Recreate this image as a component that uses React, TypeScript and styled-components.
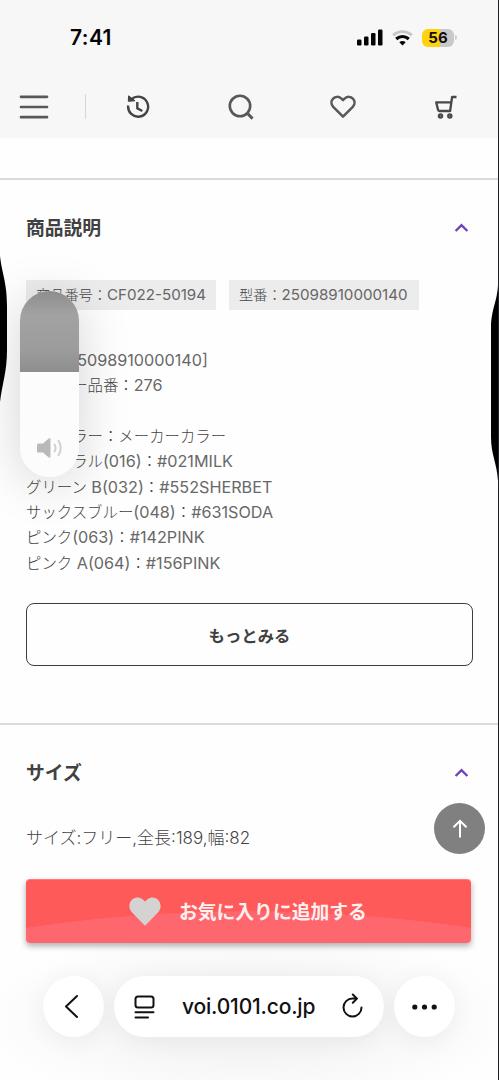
import React from 'react';
import styled, { createGlobalStyle } from 'styled-components';

const Global = createGlobalStyle`
  * { box-sizing: border-box; }
  body { margin: 0; background: #fefefe; }
  button { font: inherit; border: 0; padding: 0; background: none; color: inherit; }
`;

const Screen = styled.div`
  position: relative;
  width: 499px;
  height: 1080px;
  overflow: hidden;
  background: #fefefe;
  border-right: 1px solid #202022;
  font-family: Inter, 'Noto Sans CJK JP', sans-serif;
  color: #414141;
`;

const Header = styled.header`
  height: 138px;
  background: #f7f7f7;
`;

const StatusBar = styled.div`
  height: 75px;
  display: flex;
  align-items: center;
  justify-content: space-between;
  padding: 0 41px 0 70px;
`;

const Clock = styled.div`
  font-size: 21px;
  font-weight: 600;
  color: #050505;
  letter-spacing: 0.4px;
`;

const StatusIcons = styled.div`
  display: flex;
  align-items: center;
  height: 20px;
`;

const Battery = styled.div`
  width: 32px;
  height: 18px;
  margin-left: 9px;
  border-radius: 6px;
  background: linear-gradient(90deg, #fdd20f 56%, #c9c9cb 56%);
  font-size: 15px;
  line-height: 18px;
  font-weight: 700;
  text-align: center;
  color: #151005;
`;

const BatteryTip = styled.div`
  width: 2px;
  height: 5px;
  margin-left: 1px;
  border-radius: 0 2px 2px 0;
  background: #cfcfd1;
`;

const Nav = styled.nav`
  height: 63px;
  display: flex;
  align-items: center;
  padding-left: 18px;
`;

const NavButton = styled.button<{ $w: number; $gap?: number }>`
  display: flex;
  justify-content: center;
  width: ${(p) => p.$w}px;
  margin-left: ${(p) => p.$gap ?? 0}px;
  color: #58585a;
`;

const NavRule = styled.div`
  width: 1px;
  height: 25px;
  margin-left: 35px;
  background: #d6d6d6;
`;

const Spacer = styled.div`
  height: 40px;
`;

const Section = styled.section<{ $h?: number }>`
  height: ${(p) => (p.$h ? `${p.$h}px` : 'auto')};
  padding: 0 26px 0 26px;
  border-top: 2px solid #dadada;
`;

const SectionHead = styled.div`
  display: flex;
  align-items: center;
  justify-content: space-between;
  height: 98px;
  padding-right: 3px;
`;

const Title = styled.h2`
  margin: 0;
  font-size: 18.8px;
  font-weight: 700;
  line-height: 28px;
`;

const Tags = styled.div`
  display: flex;
  gap: 13px;
  margin-top: 2px;
`;

const Tag = styled.div<{ $w: number }>`
  width: ${(p) => p.$w}px;
  height: 30px;
  padding-left: 10px;
  background: #ececec;
  color: #666;
  font-size: 15.15px;
  line-height: 30px;
  white-space: nowrap;
`;

const TagJp = styled.span`
  font-size: 14.2px;
  font-weight: 300;
  color: #444;
`;

const Jp = styled.span`
  font-size: 15.4px;
  font-weight: 300;
  color: #444;
`;

const Details = styled.div`
  margin-top: 38px;
  font-size: 16.2px;
  line-height: 25.35px;
  color: #686868;
`;

const Line = styled.div`
  height: 25.35px;
  white-space: nowrap;
`;

const MoreButton = styled.button`
  display: block;
  width: 447px;
  height: 63px;
  margin-top: 27px;
  border: 1.5px solid #3e3e40;
  border-radius: 8px;
  font-size: 16.4px;
  font-weight: 700;
`;

const SizeText = styled.p`
  margin: 3px 0 0;
  font-size: 17px;
  font-weight: 300;
  line-height: 25px;
  color: #444;
  white-space: nowrap;
`;

const TopButton = styled.button`
  position: absolute;
  left: 434px;
  top: 803px;
  width: 51px;
  height: 51px;
  border-radius: 50%;
  background: #808080;
  display: flex;
  align-items: center;
  justify-content: center;
`;

const Dock = styled.div`
  position: absolute;
  left: 0;
  right: 0;
  bottom: 0;
  height: 201px;
  padding: 0 27px 0 26px;
  background: radial-gradient(ellipse 270px 90px at 50% 140px, #f5f5f5 40%, rgba(250, 250, 250, 0) 100%);
`;

const Favorite = styled.button`
  width: 445px;
  height: 64px;
  display: flex;
  align-items: center;
  padding-left: 102px;
  gap: 17px;
  border-radius: 4px;
  border-top: 1px solid #ff7a7c;
  background: radial-gradient(circle 1500px at 50% 1531px, #ff676f 99.95%, #ff5a5a 100%);
  box-shadow: 0 3px 6px rgba(0, 0, 0, 0.32);
  color: #fff0f0;
  font-size: 18.8px;
  font-weight: 700;
  line-height: 28px;
  white-space: nowrap;
`;

const FavoriteLabel = styled.span`
  padding-top: 2px;
`;

const Browser = styled.div`
  display: flex;
  gap: 10px;
  margin: 33px 0 0 17px;
`;

const Pill = styled.div<{ $w: number; $shift?: number }>`
  width: ${(p) => p.$w}px;
  height: 61px;
  flex: none;
  padding-right: ${(p) => p.$shift ?? 0}px;
  border-radius: 31px;
  background: #fff;
  box-shadow: 0 4px 26px rgba(0, 0, 0, 0.06);
  display: flex;
  align-items: center;
  justify-content: center;
`;

const Address = styled.span`
  width: 134px;
  margin: 0 26px 0 27px;
  font-size: 21px;
  font-weight: 500;
  letter-spacing: -0.18px;
  color: #111;
  white-space: nowrap;
`;

const Volume = styled.div`
  position: absolute;
  left: 20px;
  top: 291px;
  width: 59px;
  height: 186px;
  border-radius: 30px;
  overflow: hidden;
  background: #fcfcfc;
  display: flex;
  flex-direction: column;
  align-items: center;
`;

const VolumeShade = styled.div`
  position: absolute;
  left: 20px;
  top: 291px;
  width: 59px;
  height: 186px;
  border-radius: 30px;
  box-shadow: 0 6px 50px rgba(0, 0, 0, 0.17);
`;

const VolumeEmpty = styled.div`
  width: 59px;
  height: 81px;
  margin-bottom: 65px;
  background: linear-gradient(180deg, #8e8e8e, #a2a2a2 30%, #9c9c9c 72%, #8e8e8e);
`;

const Edge = styled.svg<{ $side: 'left' | 'right'; $top: number }>`
  position: absolute;
  top: ${(p) => p.$top}px;
  ${(p) => p.$side}: 0;
`;

const Chevron = () => (
  <svg width="15" height="12" viewBox="0 0 15 12" fill="none" stroke="#7340bd" strokeWidth="2.4">
    <path d="M1.600 8 7.500 2.200 13.400 8" />
  </svg>
);

const HEART = 'M13 22.500 3.300 12.600C-2.300 6.400 5-2.200 11.300 2.800L13 4.400l1.700-1.600C21-2.200 28.300 6.400 22.700 12.600Z';

export default function App() {
  return (
    <>
      <Global />
      <Screen>
        <Header>
          <StatusBar>
            <Clock>7:41</Clock>
            <StatusIcons>
              <svg width="26" height="17" viewBox="0 0 26 17" fill="#050505">
                <rect x="0" y="10.500" width="4.500" height="6" rx="1.200" />
                <rect x="7" y="7.500" width="4.500" height="9" rx="1.200" />
                <rect x="14" y="4" width="4.500" height="12.500" rx="1.200" />
                <rect x="21" y="0.500" width="4.500" height="16" rx="1.200" />
              </svg>
              <svg width="30" height="16" viewBox="-9 0 30 16" fill="none">
                <path d="M1.200 5.300C6.500.300 14.500.300 19.800 5.300" stroke="#c6c6c8" strokeWidth="2.800" />
                <path d="M4.200 9C8 5.700 13 5.700 16.800 9" stroke="#050505" strokeWidth="3.200" />
                <path d="M7.300 12.200q3.200-2.300 6.400 0L10.500 15.500Z" fill="#050505" />
              </svg>
              <Battery>56</Battery>
              <BatteryTip />
            </StatusIcons>
          </StatusBar>
          <Nav>
            <NavButton $w={32} aria-label="メニュー">
              <svg width="32" height="26" viewBox="0 0 32 26" stroke="currentColor" strokeWidth="2.700" strokeLinecap="round">
                <path d="M3 2.800H29M3 13H29M3 23.200H29" />
              </svg>
            </NavButton>
            <NavRule />
            <NavButton $w={26} $gap={39} aria-label="履歴">
              <svg width="26" height="24" viewBox="0 0 26 24" fill="none" stroke="#444446" strokeWidth="2.400">
                <path d="M3.200 10.500A10 10 0 1 0 6.500 4.200" />
                <path d="M3.600.800 3.300 6.300 10 5.800Z" fill="#444446" strokeWidth="1" />
                <path d="M12.300 7v6.300l5 2.700" />
              </svg>
            </NavButton>
            <NavButton $w={30} $gap={75} aria-label="検索">
              <svg width="30" height="28" viewBox="0 0 30 28" fill="none" stroke="currentColor" strokeWidth="2.600">
                <circle cx="14" cy="13" r="10.200" />
                <path d="m21.300 20.300 5.300 5.300" strokeWidth="3" />
              </svg>
            </NavButton>
            <NavButton $w={28} $gap={73} aria-label="お気に入り">
              <svg width="28" height="24" viewBox="-1 -0.500 28 24" fill="none" stroke="currentColor" strokeWidth="2.500" strokeLinejoin="round">
                <path d="M13 21.200 3.200 11.400C-2 5.300 5.500-1.800 11.200 2.900L13 4.700l1.800-1.800C20.500-1.800 28 5.300 22.800 11.400Z" />
              </svg>
            </NavButton>
            <NavButton $w={24} $gap={77} aria-label="カート">
              <svg width="24" height="24" viewBox="0 0 24 24" fill="none" stroke="#48484a" strokeWidth="2.300">
                <path d="M22.500 2h-4.400l-2 14H5.600Q4.200 16 4 14.600L2.200 7.300H17" strokeLinejoin="round" />
                <circle cx="6.500" cy="21" r="1.600" />
                <circle cx="15.800" cy="21" r="1.600" />
              </svg>
            </NavButton>
          </Nav>
        </Header>
        <Spacer />
        <Section $h={545}>
          <SectionHead><Title>商品説明</Title><Chevron /></SectionHead>
          <Tags>
            <Tag $w={190}><TagJp>商品番号：</TagJp>CF022-50194</Tag>
            <Tag $w={190}><TagJp>型番：</TagJp>25098910000140</Tag>
          </Tags>
          <Details>
            <Line>[<Jp>型番</Jp> 25098910000140]</Line>
            <Line><Jp>メーカー品番：</Jp>276</Line>
            <Line />
            <Line><Jp>当社カラー：メーカーカラー</Jp></Line>
            <Line><Jp>ナチュラル</Jp>(016)<Jp>：</Jp>#021MILK</Line>
            <Line><Jp>グリーン</Jp> B(032)<Jp>：</Jp>#552SHERBET</Line>
            <Line><Jp>サックスブルー</Jp>(048)<Jp>：</Jp>#631SODA</Line>
            <Line><Jp>ピンク</Jp>(063)<Jp>：</Jp>#142PINK</Line>
            <Line><Jp>ピンク</Jp> A(064)<Jp>：</Jp>#156PINK</Line>
          </Details>
          <MoreButton>もっとみる</MoreButton>
        </Section>
        <Section>
          <SectionHead><Title>サイズ</Title><Chevron /></SectionHead>
          <SizeText>サイズ:フリー,全長:189,幅:82</SizeText>
        </Section>
        <TopButton aria-label="ページトップへ">
          <svg width="16" height="20" viewBox="0 0 16 20" fill="none" stroke="#fff" strokeWidth="2">
            <path d="M8 18.500V2M1.500 8.300 8 1.800l6.500 6.500" />
          </svg>
        </TopButton>
        <Dock>
          <Favorite>
            <svg width="34" height="30" viewBox="0.500 1 25 22.500" fill="#d5d2d2"><path d={HEART} /></svg>
            <FavoriteLabel>お気に入りに追加する</FavoriteLabel>
          </Favorite>
          <Browser>
            <Pill $w={61} $shift={4}>
              <svg width="15" height="25" viewBox="0 0 15 25" fill="none" stroke="#111" strokeWidth="2" strokeLinecap="round" strokeLinejoin="round">
                <path d="M13 2 2 12.500 13 23" />
              </svg>
            </Pill>
            <Pill $w={270} $shift={1}>
              <svg width="21" height="24" viewBox="0 0 21 24" fill="none" stroke="#111" strokeWidth="2" strokeLinecap="round">
                <rect x="1.500" y="1.500" width="18" height="11" rx="2.500" />
                <path d="M1.500 17.300h18M1.500 22.500h12.500" />
              </svg>
              <Address>voi.0101.co.jp</Address>
              <svg width="21" height="27" viewBox="0 0 21 27" fill="none" stroke="#111" strokeWidth="2" strokeLinecap="round" strokeLinejoin="round">
                <path d="M19.500 14.500A9 9 0 1 1 10.500 5.500H15M10.800 1.500 15 5.600 10.800 9.700" />
              </svg>
            </Pill>
            <Pill $w={61}>
              <svg width="25" height="6" viewBox="0 0 25 6" fill="#111">
                <circle cx="2.800" cy="3" r="2.600" /><circle cx="12.500" cy="3" r="2.600" /><circle cx="22.200" cy="3" r="2.600" />
              </svg>
            </Pill>
          </Browser>
        </Dock>
        <VolumeShade />
        <Volume>
          <VolumeEmpty />
          <svg width="28" height="22" viewBox="0 0 28 22" fill="none" stroke="#d0d0d0" strokeWidth="2" strokeLinecap="round">
            <path d="M2.500 6.500H7l5.500-4.700q2-1.300 2 1v16.400q0 2.300-2 1L7 15.500H2.500Q1 15.500 1 14V8Q1 6.500 2.500 6.500Z" fill="#b9b9b9" stroke="none" />
            <path d="M18.500 7.500q2.200 3.500 0 7M22.500 3.800q4.400 7.200 0 14.400" />
          </svg>
        </Volume>
        <Edge $side="left" $top={256} width="8" height="146" viewBox="0 0 8 146">
          <path d="M0 0C2 18 7 26 7 50V94C7 116 2 128 0 146Z" fill="#000" />
        </Edge>
        <Edge $side="right" $top={285} width="7" height="196" viewBox="0 0 7 196">
          <path d="M7 0C6 18 0 24 0 44V152C0 170 6 178 7 196Z" fill="#000" />
        </Edge>
      </Screen>
    </>
  );
}
